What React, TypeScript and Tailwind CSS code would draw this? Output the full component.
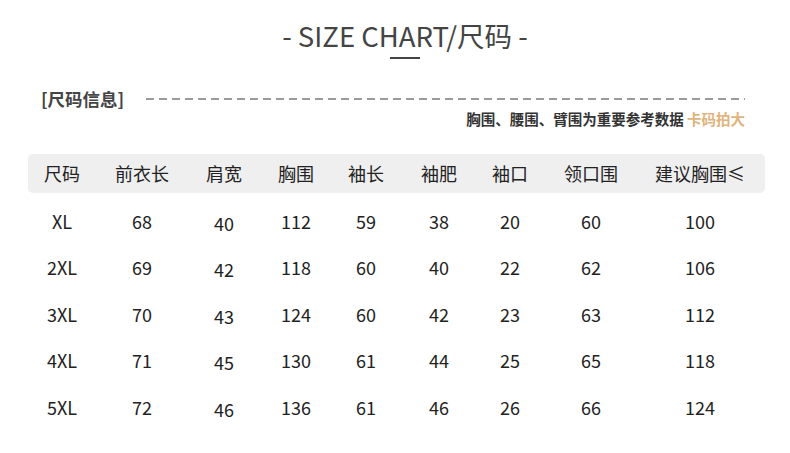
const headers = ['尺码', '前衣长', '肩宽', '胸围', '袖长', '袖肥', '袖口', '领口围', '建议胸围≤']

const rows = [
  ['XL', '68', '40', '112', '59', '38', '20', '60', '100'],
  ['2XL', '69', '42', '118', '60', '40', '22', '62', '106'],
  ['3XL', '70', '43', '124', '60', '42', '23', '63', '112'],
  ['4XL', '71', '45', '130', '61', '44', '25', '65', '118'],
  ['5XL', '72', '46', '136', '61', '46', '26', '66', '124'],
]

// fixed column widths so the centres line up with the chart
const cols = 'grid grid-cols-[68px_92px_72px_72px_68px_78px_64px_98px_120px]'

export default function App() {
  return (
    <div
      className="w-[790px] h-[453px] bg-white overflow-hidden"
      style={{ fontFamily: '"Noto Sans CJK SC", "Noto Sans", sans-serif' }}
    >
      {/* Title */}
      <div className="pt-[15px] pl-[20px] flex flex-col items-center">
        <h1 className="text-[27.5px] leading-[40px] text-[#444]">- SIZE CHART/尺码 -</h1>
        <div className="mt-[2px] w-[30px] h-[2px] bg-[#444]" />
      </div>

      {/* Info line */}
      <div className="mt-[27px] pl-[41px] pr-[45px]">
        <div className="flex items-center gap-[22px]">
          <span className="text-[17.5px] leading-[26px] font-bold text-[#444]">[尺码信息]</span>
          <div className="flex-1 h-[2px] bg-[repeating-linear-gradient(90deg,#9a9a9a_0_8px,transparent_8px_13px)]" />
        </div>
        <div className="flex justify-end -mt-[4px]">
          <span className="text-[14.5px] leading-[22px] font-bold text-[#333]">
            胸围、腰围、臂围为重要参考数据 <span className="text-[#e0b47a]">卡码拍大</span>
          </span>
        </div>
      </div>

      {/* Table */}
      <div className="mt-[24px] pl-[28px] pr-[25px]">
        <div className={`${cols} h-[39px] items-center bg-[#efefef] rounded-[5px] text-[18px] text-[#222]`}>
          {headers.map((h) => (
            <div key={h} className="text-center">{h}</div>
          ))}
        </div>
        <div className="pt-[5px]">
          {rows.map((r) => (
            <div key={r[0]} className={`${cols} h-[46.5px] items-center text-[18px] text-[#222]`}>
              {r.map((v, i) => (
                <div key={i} className={`text-center ${i === 2 ? 'pt-[4px]' : ''}`}>{v}</div>
              ))}
            </div>
          ))}
        </div>
      </div>
    </div>
  )
}
